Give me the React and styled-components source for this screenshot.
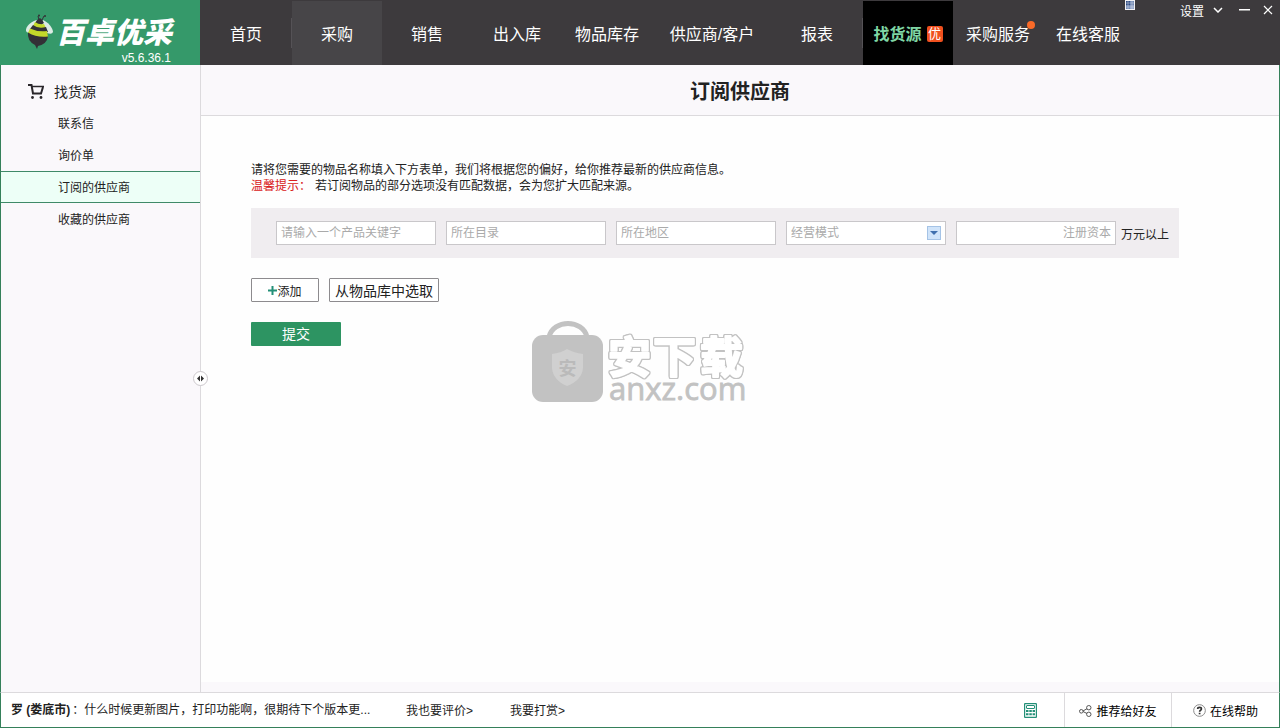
import React from "react";
import styled, { createGlobalStyle, css } from "styled-components";

const GlobalStyle = createGlobalStyle`
  * { box-sizing: border-box; }
  body { margin: 0; }
  body, button, input, select {
    font-family: "Liberation Sans", "Noto Sans CJK SC", sans-serif;
    font-size: 12px;
    color: #222;
  }
  button { margin: 0; padding: 0; border: 0; background: none; cursor: pointer; }
  a { color: inherit; text-decoration: none; }
`;

const Shell = styled.div`
  min-height: 100vh;
  display: flex;
  flex-direction: column;
  position: relative;
`;

const Header = styled.header`
  height: 65px;
  display: flex;
  background: #3d3a3d;
  color: #fff;
  position: relative;
`;

const Brand = styled.div`
  width: 200px;
  flex: none;
  display: grid;
  grid-template-columns: 32px 120px;
  grid-template-rows: 34px 16px;
  padding: 14px 0 0 24px;
  background: #35996a;
`;

const BrandName = styled.div`
  font: italic 900 29px/32px "Noto Sans CJK SC", sans-serif;
  white-space: nowrap;
`;

const Version = styled.div`
  grid-column: 2;
  padding-right: 5px;
  font-size: 12px;
  line-height: 20px;
  text-align: right;
`;

const Nav = styled.nav`
  display: flex;
  flex: 1;
  padding-left: 1px;
`;

const NavLink = styled.a`
  width: ${(p) => (p.$wide ? 120 : 90)}px;
  height: 64px;
  margin-top: 1px;
  display: flex;
  align-items: center;
  justify-content: center;
  gap: 5px;
  font-size: 16px;
  white-space: nowrap;
  ${(p) => p.$tone === "soft" && css`background: #474548;`}
  ${(p) =>
    p.$tone === "active" &&
    css`
      background: #000;
      color: #7fd6a4;
      font-weight: bold;
    `}
`;

const NavDivider = styled.span`
  width: 1px;
  height: 30px;
  margin-top: 18px;
  background: #555256;
`;

const Tag = styled.span`
  width: 16px;
  height: 16px;
  margin-top: 2px;
  border-radius: 2px;
  background: #f0501e;
  color: #fff;
  font-size: 13px;
  font-weight: normal;
  line-height: 16px;
  text-align: center;
`;

const Dotted = styled.span`
  position: relative;
  &::after {
    content: "";
    position: absolute;
    top: 0;
    right: -5px;
    width: 8px;
    height: 8px;
    border-radius: 50%;
    background: #fa6a28;
  }
`;

const WindowTools = styled.div`
  position: absolute;
  top: 0;
  right: 7px;
  height: 20px;
  display: flex;
  align-items: center;
`;

const ToolButton = styled.button`
  height: 20px;
  display: flex;
  align-items: center;
  gap: 9px;
  margin-left: ${(p) => p.$gap || 0}px;
  padding-bottom: ${(p) => (p.$raised ? 10 : 0)}px;
  color: #fff;
`;

const Body = styled.div`
  flex: 1;
  display: flex;
  border: 1px solid #35805a;
  border-width: 0 1px;
`;

const Sidebar = styled.aside`
  width: 200px;
  flex: none;
  padding-top: 10px;
  position: relative;
  border-right: 1px solid #dcdadd;
  background: #faf8fb;
`;

const SideTitle = styled.h2`
  height: 32px;
  margin: 0;
  padding-left: 26px;
  display: flex;
  align-items: center;
  gap: 9px;
  font-size: 14px;
  font-weight: normal;
`;

const SideLink = styled.a`
  display: block;
  height: 32px;
  padding-left: 57px;
  line-height: 34px;
  ${(p) =>
    p.$active &&
    css`
      line-height: 32px;
      border: 1px solid #3f8a68;
      border-width: 1px 0;
      background: #edfff7;
    `}
`;

const Collapse = styled.button`
  position: absolute;
  top: 50%;
  right: -8px;
  width: 15px;
  height: 15px;
  margin-top: -8px;
  display: flex;
  align-items: center;
  justify-content: center;
  border: 1px solid #ccc8cc;
  border-radius: 50%;
  background: #fff;
`;

const Main = styled.main`
  flex: 1;
  min-width: 0;
  display: flex;
  flex-direction: column;
  background: #fefefe;
  border-bottom: 10px solid #faf8fb;
`;

const PageTitle = styled.h1`
  height: 51px;
  margin: 0;
  border-bottom: 1px solid #dcdadd;
  background: #faf8fb;
  font-size: 20px;
  line-height: 54px;
  text-align: center;
`;

const Content = styled.form`
  padding: 46px 50px;
  display: flex;
  flex-direction: column;
  align-items: flex-start;
`;

const Intro = styled.p`
  margin: 0;
  line-height: 16px;
`;

const Warning = styled.span`
  margin-right: 4px;
  color: #d92020;
`;

const Fields = styled.div`
  height: 50px;
  margin-top: 14px;
  padding: 0 10px 0 25px;
  display: flex;
  align-items: center;
  gap: 10px;
  background: #f0edf0;
`;

const box = css`
  width: 160px;
  height: 24px;
  padding: 0 4px;
  border: 1px solid #c9c7ca;
  border-radius: 0;
  background: #fff;
  outline: 0;
`;

const TextField = styled.input`
  ${box}
  text-align: ${(p) => (p.$right ? "right" : "left")};
  &::placeholder { color: #aaa; opacity: 1; }
`;

const SelectWrap = styled.div`
  position: relative;
  display: flex;
`;

const SelectField = styled.select`
  ${box}
  appearance: none;
  color: #aaa;
`;

const SelectArrow = styled.span`
  position: absolute;
  top: 5px;
  right: 5px;
  width: 14px;
  height: 14px;
  display: flex;
  align-items: center;
  justify-content: center;
  border: 1px solid #a5c3e6;
  background: #d0e4fa;
  pointer-events: none;
`;

const UnitLabel = styled.label`
  display: flex;
  align-items: center;
  gap: 5px;
  white-space: nowrap;
`;

const Actions = styled.div`
  display: flex;
  gap: 10px;
  margin: 20px 0;
`;

const OutlineButton = styled.button`
  width: ${(p) => p.$width}px;
  height: 24px;
  display: flex;
  align-items: center;
  justify-content: center;
  border: 1px solid #8d8b8e;
  border-radius: 1px;
  background: #fff;
  font-size: ${(p) => p.$size}px;
`;

const SubmitButton = styled.button`
  width: 90px;
  height: 24px;
  border-radius: 1px;
  background: #2d9462;
  color: #fff;
  font-size: 14px;
  line-height: 24px;
`;

const Footer = styled.footer`
  height: 36px;
  display: flex;
  align-items: stretch;
  border: 1px solid #35805a;
  border-top-color: #dcdadd;
  background: #fff;
  line-height: 34px;
  white-space: nowrap;
`;

const Comment = styled.div`
  width: 405px;
  padding-left: 10px;
`;

const Author = styled.b`
  margin-right: 2px;
`;

const FootLink = styled.a`
  width: 104px;
  padding-top: 1px;
`;

const FootTools = styled.div`
  display: flex;
  margin-left: auto;
`;

const FootButton = styled.button`
  width: ${(p) => p.$width}px;
  padding-top: 1px;
  display: flex;
  align-items: center;
  justify-content: center;
  gap: 4px;
  color: #000;
  & + & { border-left: 1px solid #dcdadd; }
`;

const Watermark = styled.div`
  position: absolute;
  top: 50%;
  left: 50%;
  margin: -46px 0 0 -110px;
  pointer-events: none;
`;

const OutlinedText = styled.text`
  font: 700 43px "Noto Sans CJK SC", sans-serif;
  fill: #fff;
  stroke: #fff;
  stroke-width: 2px;
  stroke-linejoin: round;
  filter: drop-shadow(1px 0 0 #c2c2c2) drop-shadow(-1px 0 0 #c2c2c2)
    drop-shadow(0 1px 0 #c2c2c2) drop-shadow(0 -1px 0 #c2c2c2);
`;

const Bee = () => (
  <svg width="32" height="36" viewBox="0 0 32 36" aria-hidden="true">
    <path d="M15 6L14 2M18 6L20 2" fill="none" stroke="#333036" />
    <circle cx="15" cy="1.500" r="1" fill="#333036" />
    <circle cx="21" cy="2" r="1" fill="#333036" />
    <path d="M14 6C8 6 1 13 2 17Q3 20 8 18L15 9Z" fill="#dcebe4" />
    <path d="M19 6C24 8 29 14 29 18Q28 21 23 19L17 9Z" fill="#dcebe4" />
    <path d="M16 4Q12 6 11 9Q16 12 20 9Q19 6 16 4Z" fill="#333036" />
    <path d="M11 8Q15 11 20 10L22 14Q14 16 9 12Z" fill="#c4d92a" />
    <path d="M9 11Q14 15 22 13L24 18Q13 20 6 15Z" fill="#333036" />
    <path d="M6 14.500Q13 18 23 17L24 23Q13 25 4 19Z" fill="#c4d92a" />
    <path d="M4 18.500Q13 24 24 22.500Q23 30 14 32L13 35L11 31Q3 27 4 18.500Z" fill="#333036" />
  </svg>
);

const Cart = () => (
  <svg width="18" height="17" viewBox="0 0 18 17" fill="none" stroke="#29262a" strokeWidth="2" aria-hidden="true">
    <path d="M1 2H4.500L6 10.500H14L16 4" />
    <path d="M4.500 3.500H17" strokeWidth="1.500" />
    <circle cx="5.500" cy="14.500" r="1.400" fill="#29262a" stroke="none" />
    <circle cx="14" cy="14.500" r="1.400" fill="#29262a" stroke="none" />
  </svg>
);

const GridIcon = () => (
  <svg width="10" height="10" viewBox="0 0 10 10" aria-hidden="true">
    <path fill="#f2f2f5" d="M0 0H10V10H0Z" />
    <path fill="#304d83" d="M1 1H5V5H1Z" />
    <path fill="#6f87b2" d="M5 1H9V5H5ZM1 5H5V9H1Z" />
    <path fill="#91a4c8" d="M5 5H9V9H5Z" />
    <path stroke="#d0d7e5" strokeWidth=".5" d="M3 1V9M7 1V9M1 3H9M1 7H9" />
  </svg>
);

const Calculator = () => (
  <svg width="13" height="15" viewBox="0 0 13 15" fill="none" stroke="#249078" aria-hidden="true">
    <rect x=".6" y=".6" width="11.800" height="13.800" rx=".5" strokeWidth="1.200" />
    <rect x="2.500" y="2.500" width="8" height="3" rx=".5" />
    <path
      d="M2 7H4.500V9H2ZM5.300 7H7.800V9H5.300ZM8.600 7H11V9H8.600ZM2 10.300H4.500V12.300H2ZM5.300 10.300H7.800V12.300H5.300ZM8.600 10.300H11V12.300H8.600Z"
      fill="#249078"
      stroke="none"
    />
  </svg>
);

const Share = () => (
  <svg width="13" height="12" viewBox="0 0 13 12" fill="none" stroke="#555" aria-hidden="true">
    <circle cx="2.300" cy="6.300" r="1.800" />
    <circle cx="9.800" cy="2.700" r="2.200" />
    <circle cx="9.800" cy="9.300" r="2.200" />
    <path d="M4 6L8 3.700M4 6.500L8 8.500" />
  </svg>
);

const Help = () => (
  <svg width="13" height="13" viewBox="0 0 12 12" fill="none" stroke="#888" aria-hidden="true">
    <circle cx="6" cy="6" r="5.400" strokeWidth=".9" />
    <path d="M4.300 4.500C4.300 2.600 7.800 2.600 7.800 4.500C7.800 5.800 6.100 5.700 6.100 7.100" stroke="#333" strokeWidth="1.500" />
    <path d="M5.300 8.100H6.900V9.500H5.300Z" fill="#333" stroke="none" />
  </svg>
);

const WatermarkArt = () => (
  <svg width="224" height="100" viewBox="0 0 224 100" aria-hidden="true">
    <path d="M19 19C23 1 53 1 57 19" fill="none" stroke="#c2c2c2" strokeWidth="5" />
    <rect x="2" y="17" width="71" height="67" rx="11" fill="#c2c2c2" />
    <path d="M22 36Q31 35 37 31Q44 35 53 36V50Q52 62 37 68Q23 62 22 50Z" fill="#d0d0d0" />
    <text x="37.500" y="57" fontSize="18" fontWeight="bold" fill="#bababa" textAnchor="middle" fontFamily="Noto Sans CJK SC, sans-serif">安</text>
    <OutlinedText x="78 123 170" y="55">安下载</OutlinedText>
    <text x="79" y="82" fontSize="31" fill="#c2c2c2" stroke="#c2c2c2" strokeWidth=".8" fontFamily="Open Sans, sans-serif">anxz.com</text>
  </svg>
);

export default function App() {
  return (
    <Shell lang="zh-CN">
      <GlobalStyle />
      <Header>
        <Brand>
          <Bee />
          <BrandName>百卓优采</BrandName>
          <Version>v5.6.36.1</Version>
        </Brand>
        <Nav>
          <NavLink href="#">首页</NavLink>
          <NavDivider />
          <NavLink href="#" $tone="soft">采购</NavLink>
          <NavLink href="#">销售</NavLink>
          <NavLink href="#">出入库</NavLink>
          <NavLink href="#">物品库存</NavLink>
          <NavLink href="#" $wide>供应商/客户</NavLink>
          <NavLink href="#">报表</NavLink>
          <NavDivider />
          <NavLink href="#" $tone="active">找货源<Tag>优</Tag></NavLink>
          <NavLink href="#"><Dotted>采购服务</Dotted></NavLink>
          <NavLink href="#">在线客服</NavLink>
        </Nav>
        <WindowTools>
          <ToolButton $raised aria-label="面板"><GridIcon /></ToolButton>
          <ToolButton $gap={45}>
            设置
            <svg width="10" height="6" viewBox="0 0 10 6" fill="none" stroke="#fff" strokeWidth="1.5" aria-hidden="true"><path d="M1 1L5 5L9 1" /></svg>
          </ToolButton>
          <ToolButton $gap={16} aria-label="最小化">
            <svg width="11" height="2" viewBox="0 0 11 2" aria-hidden="true"><path fill="#fff" d="M0 0H11V1.500H0Z" /></svg>
          </ToolButton>
          <ToolButton $gap={13} aria-label="关闭">
            <svg width="10" height="10" viewBox="0 0 10 10" stroke="#fff" strokeWidth="1.200" aria-hidden="true"><path d="M1 1L9 9M9 1L1 9" /></svg>
          </ToolButton>
        </WindowTools>
      </Header>

      <Body>
        <Sidebar>
          <SideTitle><Cart />找货源</SideTitle>
          <nav>
            <SideLink href="#">联系信</SideLink>
            <SideLink href="#">询价单</SideLink>
            <SideLink href="#" $active>订阅的供应商</SideLink>
            <SideLink href="#">收藏的供应商</SideLink>
          </nav>
          <Collapse aria-label="收起侧栏">
            <svg width="9" height="7" viewBox="0 0 9 7" fill="#333" aria-hidden="true"><path d="M4 .5V6.500L1 3.500ZM5 .5V6.500L8 3.500Z" /></svg>
          </Collapse>
        </Sidebar>
        <Main>
          <PageTitle>订阅供应商</PageTitle>
          <Content onSubmit={(e) => e.preventDefault()}>
            <Intro>请将您需要的物品名称填入下方表单，我们将根据您的偏好，给你推荐最新的供应商信息。</Intro>
            <Intro><Warning>温馨提示：</Warning>若订阅物品的部分选项没有匹配数据，会为您扩大匹配来源。</Intro>
            <Fields>
              <TextField aria-label="产品关键字" placeholder="请输入一个产品关键字" />
              <TextField aria-label="所在目录" placeholder="所在目录" />
              <TextField aria-label="所在地区" placeholder="所在地区" />
              <SelectWrap>
                <SelectField aria-label="经营模式" defaultValue="">
                  <option value="">经营模式</option>
                </SelectField>
                <SelectArrow>
                  <svg width="8" height="4" viewBox="0 0 8 4" aria-hidden="true"><path d="M0 0H8L4 4Z" fill="#3f6fae" /></svg>
                </SelectArrow>
              </SelectWrap>
              <UnitLabel>
                <TextField $right placeholder="注册资本" />
                万元以上
              </UnitLabel>
            </Fields>
            <Actions>
              <OutlineButton type="button" $width={68} $size={12}>
                <svg width="9" height="9" viewBox="0 0 9 9" stroke="#249078" strokeWidth="2" aria-hidden="true"><path d="M4.500 0V9M0 4.500H9" /></svg>
                添加
              </OutlineButton>
              <OutlineButton type="button" $width={110} $size={14}>从物品库中选取</OutlineButton>
            </Actions>
            <SubmitButton>提交</SubmitButton>
          </Content>
        </Main>
      </Body>

      <Footer>
        <Comment><Author>罗 (娄底市)</Author>：什么时候更新图片，打印功能啊，很期待下个版本更...</Comment>
        <FootLink href="#">我也要评价&gt;</FootLink>
        <FootLink href="#">我要打赏&gt;</FootLink>
        <FootTools>
          <FootButton $width={68} aria-label="计算器"><Calculator /></FootButton>
          <FootButton $width={107}><Share />推荐给好友</FootButton>
          <FootButton $width={108}><Help />在线帮助</FootButton>
        </FootTools>
      </Footer>

      <Watermark><WatermarkArt /></Watermark>
    </Shell>
  );
}
